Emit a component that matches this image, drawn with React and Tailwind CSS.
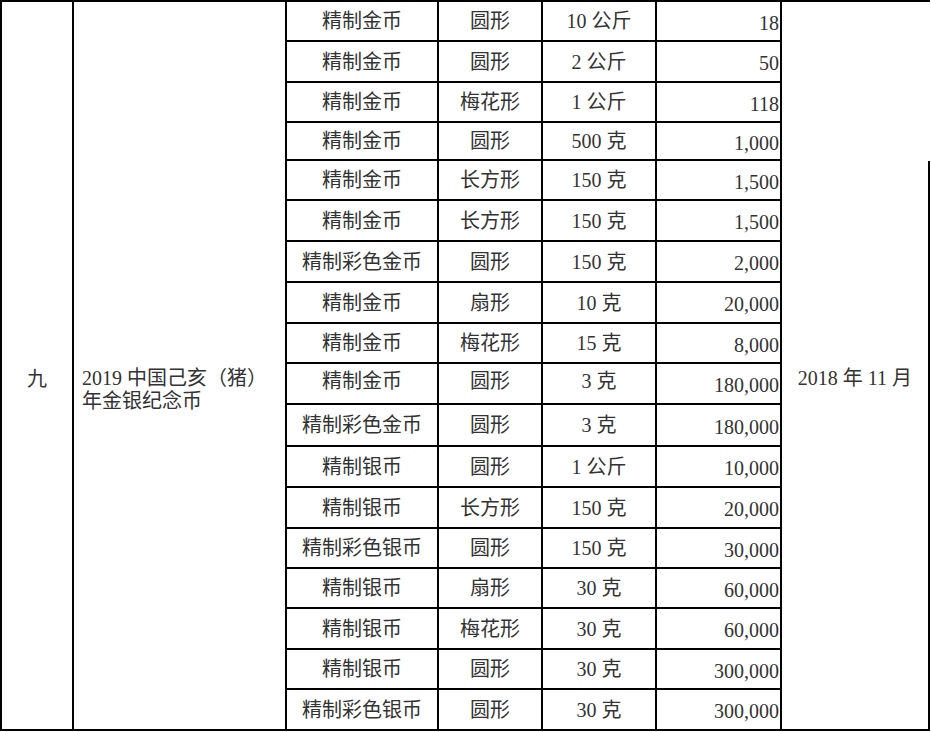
import React from "react";

const rows = [
  ["精制金币", "圆形", "10 公斤", "18"],
  ["精制金币", "圆形", "2 公斤", "50"],
  ["精制金币", "梅花形", "1 公斤", "118"],
  ["精制金币", "圆形", "500 克", "1,000"],
  ["精制金币", "长方形", "150 克", "1,500"],
  ["精制金币", "长方形", "150 克", "1,500"],
  ["精制彩色金币", "圆形", "150 克", "2,000"],
  ["精制金币", "扇形", "10 克", "20,000"],
  ["精制金币", "梅花形", "15 克", "8,000"],
  ["精制金币", "圆形", "3 克", "180,000"],
  ["精制彩色金币", "圆形", "3 克", "180,000"],
  ["精制银币", "圆形", "1 公斤", "10,000"],
  ["精制银币", "长方形", "150 克", "20,000"],
  ["精制彩色银币", "圆形", "150 克", "30,000"],
  ["精制银币", "扇形", "30 克", "60,000"],
  ["精制银币", "梅花形", "30 克", "60,000"],
  ["精制银币", "圆形", "30 克", "300,000"],
  ["精制彩色银币", "圆形", "30 克", "300,000"],
];

export default function App() {
  return (
    <div className="w-[931px] h-[732px] bg-white overflow-hidden [font-family:'Liberation_Serif','Noto_Sans_CJK_SC',serif] text-[20px] leading-[24px] text-[#333]">
      <div className="grid w-[930px] border-l-2 border-t-2 border-black grid-cols-[72px_213px_152px_104px_114px_125px_148px] grid-rows-[40px_41px_40px_38px_40px_41px_41px_41px_40px_41px_42px_41px_41px_40px_40px_41px_40px_41px]">
        <div className="[grid-column:1] [grid-row:1/span_18] border-r-2 border-b-2 border-black flex justify-center pt-[365px]">
          九
        </div>
        <div className="[grid-column:2] [grid-row:1/span_18] border-r-2 border-b-2 border-black pt-[365px] pl-[8px] leading-[23px]">
          <div>2019 中国己亥（猪）</div>
          <div>年金银纪念币</div>
        </div>
        {rows.map((r, i) => {
          const shift = i === 9 ? "pb-[6px]" : "";
          return (
            <React.Fragment key={i}>
              <div className={`border-r-2 border-b-2 border-black flex items-center justify-center whitespace-nowrap ${shift}`}>
                {r[0]}
              </div>
              <div className={`border-r-2 border-b-2 border-black flex items-center justify-center whitespace-nowrap ${shift}`}>
                {r[1]}
              </div>
              <div className={`border-r-2 border-b-2 border-black flex items-center justify-center whitespace-nowrap ${shift}`}>
                {r[2]}
              </div>
              <div className="border-r-2 border-b-2 border-black flex items-center justify-end pr-[1px] pt-[3px] whitespace-nowrap">
                {r[3]}
              </div>
              {i === 0 && (
                <div className="[grid-column:7] [grid-row:1/span_4]"></div>
              )}
              {i === 4 && (
                <div className="[grid-column:7] [grid-row:5/span_14] border-r-2 border-b-2 border-black flex justify-center pt-[205px] whitespace-nowrap">
                  2018 年 11 月
                </div>
              )}
            </React.Fragment>
          );
        })}
      </div>
    </div>
  );
}
